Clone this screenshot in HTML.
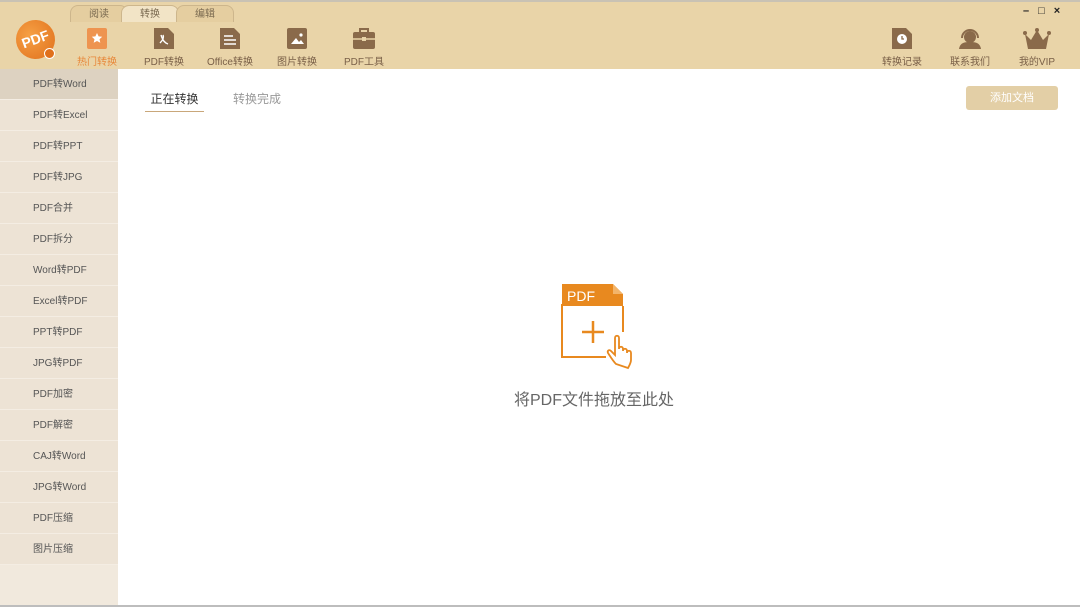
<!DOCTYPE html><html><head><meta charset="utf-8"><style>
*{margin:0;padding:0;box-sizing:border-box}
body{width:1080px;height:607px;overflow:hidden;font-family:"Liberation Sans","Noto Sans CJK SC",sans-serif;background:#fff;position:relative}
.top{position:absolute;left:0;top:0;width:1080px;height:69px;background:#e9d4a8;border-top:2px solid #c9c2b4}
.tab{position:absolute;top:3px;height:17px;width:58px;font-size:10px;color:#7a6a50;text-align:center;line-height:17px;border:1px solid #cdb68c;border-bottom:none;border-radius:8px 8px 0 0;background:#e5cea0}
.tab.on{background:#f2e4c6}
.tool{position:absolute;top:26px;width:70px;text-align:center;font-size:10px;color:#7a6048}
.tool svg{display:block;margin:0 auto 4px}
.side{position:absolute;left:0;top:69px;width:118px;height:536px;background:#f1e9dd}
.it{height:31px;line-height:31px;padding-left:33px;font-size:10px;color:#555;background:#ede3d5;border-bottom:1px solid #f4ede3}
.it.on{background:#ddd2c1}
.bot{position:absolute;left:0;top:605px;width:1080px;height:2px;background:#bdbdbd}
</style></head><body>
<div class="top">
<div style="position:absolute;left:16px;top:18px;width:39px;height:39px;border-radius:50%;background:radial-gradient(circle at 40% 35%,#f6a044,#e0701c);color:#fff;font-weight:bold;font-size:14px;line-height:39px;text-align:center;transform:rotate(-20deg)">PDF</div>
<div style="position:absolute;left:44px;top:46px;width:11px;height:11px;border-radius:50%;background:#e0701c;border:1.5px solid #fff"></div>
<div class="tab" style="left:70px">阅读</div>
<div class="tab on" style="left:121px">转换</div>
<div class="tab" style="left:176px">编辑</div>
<div class="tool" style="left:62px;color:#e8883a"><svg width="20" height="21"><rect width="20" height="21" rx="2" fill="#ee9450"/><path d="M10 5l1.6 3.4 3.6.4-2.7 2.4.8 3.6L10 13l-3.3 1.8.8-3.6-2.7-2.4 3.6-.4z" fill="#fff"/></svg>热门转换</div>
<div class="tool" style="left:129px"><svg width="20" height="21"><path d="M0 0h14l6 6v15H0z" fill="#8a6a4a"/><path d="M7 7c2 6 4 8 7 9M6 15c3-3 4-6 3-8" stroke="#fff" stroke-width="1.4" fill="none"/></svg>PDF转换</div>
<div class="tool" style="left:195px"><svg width="20" height="21"><path d="M0 0h14l6 6v15H0z" fill="#8a6a4a"/><path d="M4 8h9M4 12h12M4 16h12" stroke="#fff" stroke-width="1.6"/></svg>Office转换</div>
<div class="tool" style="left:262px"><svg width="20" height="21"><rect width="20" height="21" rx="2" fill="#8a6a4a"/><path d="M4 16l5-6 3 4 2-2 3 4z" fill="#fff"/><circle cx="14" cy="7" r="1.6" fill="#fff"/></svg>图片转换</div>
<div class="tool" style="left:329px"><svg width="22" height="21"><path d="M7 4V1h8v3" stroke="#8a6a4a" stroke-width="2" fill="none"/><rect y="4" width="22" height="17" rx="2" fill="#8a6a4a"/><path d="M0 11h22" stroke="#e9d4a8" stroke-width="1.5"/><rect x="9" y="9" width="4" height="4" fill="#e9d4a8"/></svg>PDF工具</div>
<div class="tool" style="left:867px"><svg width="20" height="21"><path d="M0 0h14l6 6v15H0z" fill="#8a6a4a"/><circle cx="10" cy="11" r="5" fill="#fff"/><path d="M10 8v3h2" stroke="#8a6a4a" stroke-width="1.3" fill="none"/></svg>转换记录</div>
<div class="tool" style="left:935px"><svg width="24" height="21"><path d="M4 10a8 8 0 0 1 16 0" stroke="#8a6a4a" stroke-width="2" fill="none"/><circle cx="12" cy="9" r="6" fill="#8a6a4a"/><path d="M1 21c1-6 5-7 11-7s10 1 11 7z" fill="#8a6a4a"/></svg>联系我们</div>
<div class="tool" style="left:1002px"><svg width="28" height="21"><path d="M2 6l6 6 6-10 6 10 6-6-3 15H5z" fill="#8a6a4a"/><circle cx="2" cy="5" r="2" fill="#8a6a4a"/><circle cx="26" cy="5" r="2" fill="#8a6a4a"/><circle cx="14" cy="2" r="2" fill="#8a6a4a"/></svg>我的VIP</div>
<div style="position:absolute;left:1023px;top:3px;font-size:11px;color:#222;letter-spacing:9px;font-weight:bold">–□×</div>
</div>
<div class="side">
<div class="it on">PDF转Word</div><div class="it">PDF转Excel</div><div class="it">PDF转PPT</div><div class="it">PDF转JPG</div><div class="it">PDF合并</div><div class="it">PDF拆分</div><div class="it">Word转PDF</div><div class="it">Excel转PDF</div><div class="it">PPT转PDF</div><div class="it">JPG转PDF</div><div class="it">PDF加密</div><div class="it">PDF解密</div><div class="it">CAJ转Word</div><div class="it">JPG转Word</div><div class="it">PDF压缩</div><div class="it">图片压缩</div>
</div>
<div style="position:absolute;left:145px;top:90px;width:59px;height:22px;border-bottom:1px solid #c9a77a;font-size:12px;color:#333;text-align:center">正在转换</div>
<div style="position:absolute;left:233px;top:90px;font-size:12px;color:#999">转换完成</div>
<div style="position:absolute;left:966px;top:86px;width:92px;height:24px;background:#e3cfa6;border-radius:3px;color:#fff;font-size:11px;text-align:center;line-height:24px">添加文档</div>
<svg style="position:absolute;left:560px;top:282px" width="80" height="88" viewBox="0 0 80 88">
<path d="M63 24v26" fill="none" stroke="#e8891f" stroke-width="2"/>
<path d="M2 2h51l10 10v12H2z" fill="#e8891f"/>
<path d="M53 2v10h10z" fill="#f3b46a"/>
<path d="M2 22v53h44" fill="none" stroke="#e8891f" stroke-width="2"/>
<text x="7" y="19" font-size="14" fill="#fff" font-family="Liberation Sans">PDF</text>
<path d="M22 50h22M33 39v22" stroke="#e8891f" stroke-width="2.5"/>
<path d="M56 82c-3-3-6-8-8-11-1-2 1-4 3-2l4 4V56c0-3 4-3 4 0v11c0-3 4-3 4 0v2c0-3 4-3 4 0v2c0-3 4-3 4 0v7c0 3-2 6-3 8z" fill="#fff" stroke="#e8891f" stroke-width="1.8"/>
</svg>
<div style="position:absolute;left:514px;top:386px;font-size:16px;color:#666">将PDF文件拖放至此处</div>
<div class="bot"></div>
</body></html>
